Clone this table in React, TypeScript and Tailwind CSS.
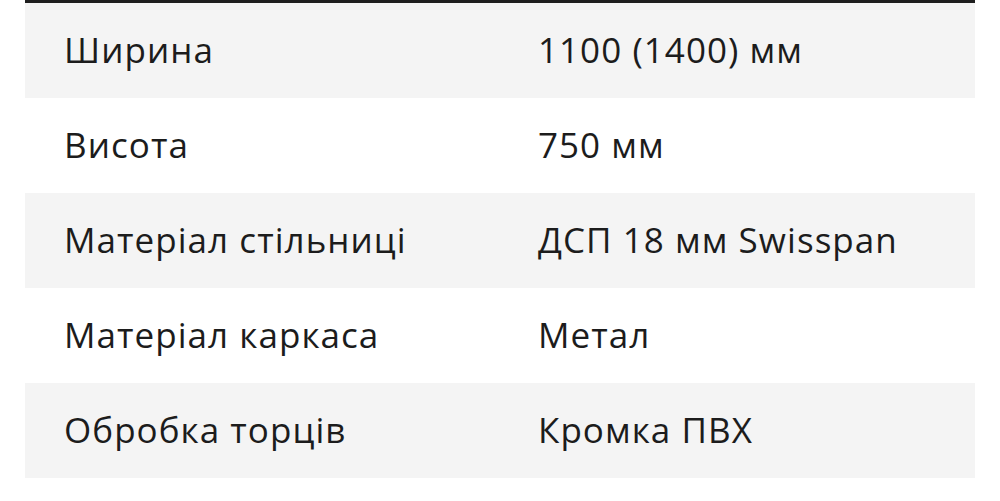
const rows: [string, string][] = [
  ["Ширина", "1100 (1400) мм"],
  ["Висота", "750 мм"],
  ["Матеріал стільниці", "ДСП 18 мм Swisspan"],
  ["Матеріал каркаса", "Метал"],
  ["Обробка торців", "Кромка ПВХ"],
];

export default function App() {
  return (
    <div className="w-[1000px] h-[501px] bg-white px-[25px] font-['Open_Sans',sans-serif] text-[#1c1c1c]">
      <div className="border-t-[3px] border-[#1e1e1e]">
        {rows.map(([label, value], i) => (
          <div
            key={label}
            className={`flex items-center h-[95px] text-[35px] tracking-[0.03em] ${i % 2 === 0 ? "bg-[#f4f4f4]" : "bg-white"}`}
          >
            <div className="w-[513px] pl-[39px]">{label}</div>
            <div>{value}</div>
          </div>
        ))}
      </div>
    </div>
  );
}
